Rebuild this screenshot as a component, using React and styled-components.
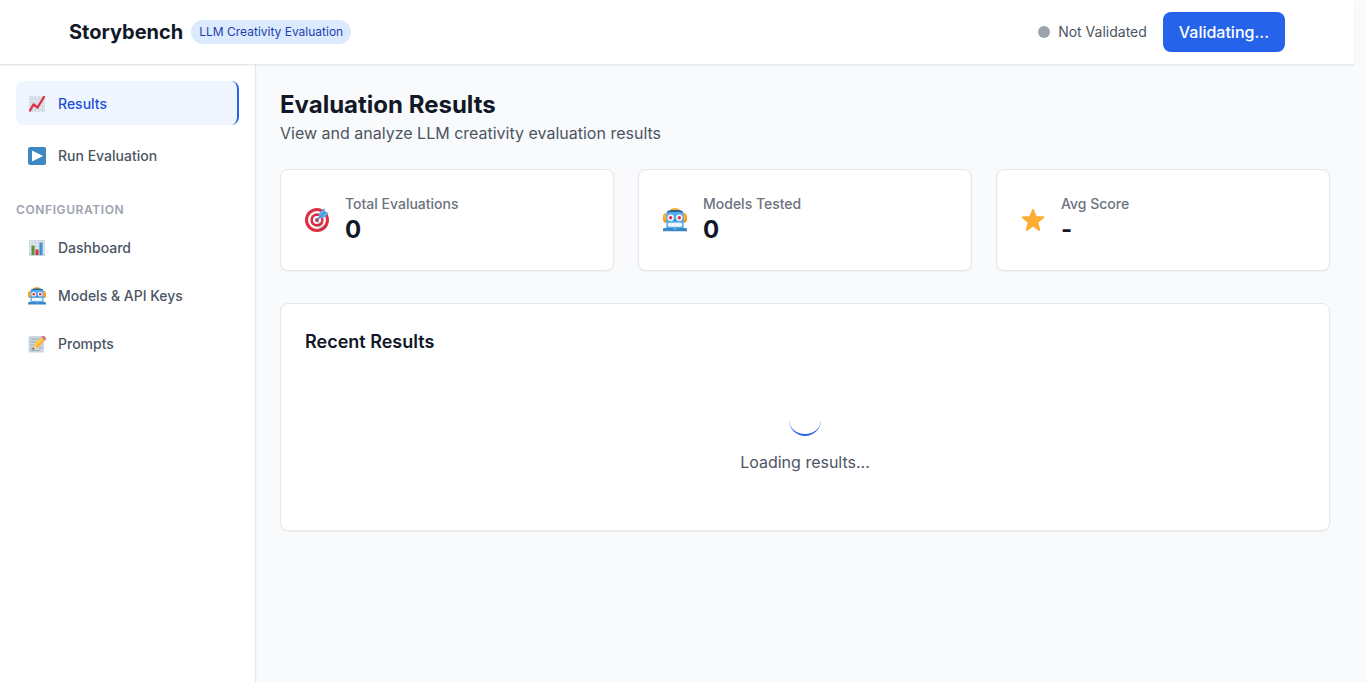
import React from 'react';
import styled, { createGlobalStyle, css, keyframes } from 'styled-components';

const GlobalStyle = createGlobalStyle`
  *, *::before, *::after { box-sizing: border-box; }
  body {
    margin: 0;
    background: #f9fafb;
    color: #111827;
    font-family: Inter, "Liberation Sans", sans-serif;
    font-size: 16px;
    line-height: 24px;
  }
  h1, h2, p, ul { margin: 0; padding: 0; }
  ul { list-style: none; }
`;

const Page = styled.div`
  min-height: 100vh;
  margin-right: 12px;
  display: flex;
  flex-direction: column;
`;

const Header = styled.header`
  position: relative;
  background: #ffffff;
  border-bottom: 1px solid #e5e7eb;
  box-shadow: 0 1px 2px rgba(0, 0, 0, 0.05);
`;

const HeaderInner = styled.div`
  max-width: 1280px;
  height: 64px;
  margin: 0 auto;
  padding: 0 32px;
  display: flex;
  align-items: center;
  justify-content: space-between;
`;

const Brand = styled.div`
  display: flex;
  align-items: center;
  gap: 8px;
`;

const BrandName = styled.span`
  font-size: 20px;
  line-height: 28px;
  font-weight: 700;
`;

const Tag = styled.span`
  padding: 4px 8px;
  border-radius: 12px;
  background: #dbeafe;
  color: #1e40af;
  font-size: 12px;
  line-height: 16px;
`;

const HeaderActions = styled.div`
  display: flex;
  align-items: center;
  gap: 16px;
`;

const Status = styled.div`
  display: flex;
  align-items: center;
  gap: 8px;
  color: #4b5563;
  font-size: 14px;
  line-height: 20px;
`;

const StatusDot = styled.span`
  width: 12px;
  height: 12px;
  border-radius: 50%;
  background: #9ca3af;
`;

const PrimaryButton = styled.button`
  padding: 8px 16px;
  border: 0;
  border-radius: 8px;
  background: #2563eb;
  color: #ffffff;
  font: inherit;
  font-weight: 500;
  cursor: pointer;
`;

const Body = styled.div`
  flex: 1;
  display: flex;
`;

const Sidebar = styled.nav`
  flex: 0 0 256px;
  padding: 16px;
  background: #ffffff;
  border-right: 1px solid #e5e7eb;
  box-shadow: 0 1px 2px rgba(0, 0, 0, 0.05);
`;

const NavList = styled.ul`
  display: flex;
  flex-direction: column;
  gap: ${(p) => p.$gap}px;
`;

const NavLink = styled.a`
  display: flex;
  align-items: center;
  gap: 12px;
  padding: 13px 12px 11px;
  border-radius: 8px;
  color: #4b5563;
  font-size: 14px;
  line-height: 20px;
  font-weight: 500;
  text-decoration: none;
  ${(p) =>
    p.$active &&
    css`
      background: #eff6ff;
      color: #1d4ed8;
      border-right: 2px solid #2563eb;
    `}
`;

const NavHeading = styled.h2`
  margin: 25px 0 7px;
  color: #9ca3af;
  font-size: 12px;
  line-height: 16px;
  font-weight: 600;
  letter-spacing: 0.05em;
  text-transform: uppercase;
`;

const Main = styled.main`
  flex: 1;
  min-width: 0;
  padding: 24px;
`;

const Title = styled.h1`
  font-size: 24px;
  line-height: 32px;
  font-weight: 700;
`;

const Subtitle = styled.p`
  color: #4b5563;
`;

const Stats = styled.div`
  display: grid;
  grid-template-columns: repeat(3, 1fr);
  gap: 24px;
  margin: 24px 0 32px;
`;

const Card = styled.section`
  padding: 24px;
  background: #ffffff;
  border: 1px solid #e5e7eb;
  border-radius: 8px;
  box-shadow: 0 1px 2px rgba(0, 0, 0, 0.05);
`;

const StatCard = styled(Card)`
  display: flex;
  align-items: center;
  gap: 16px;
`;

const StatLabel = styled.p`
  color: #6b7280;
  font-size: 14px;
  line-height: 20px;
  font-weight: 500;
`;

const StatValue = styled.p`
  font-size: 24px;
  line-height: 32px;
  font-weight: 700;
`;

const CardTitle = styled.h2`
  margin-bottom: 16px;
  font-size: 18px;
  line-height: 28px;
  font-weight: 600;
`;

const Loading = styled.div`
  display: flex;
  flex-direction: column;
  align-items: center;
  gap: 14px;
  padding: 32px 0;
  color: #4b5563;
`;

const spin = keyframes`
  from { transform: rotate(0deg); }
  to { transform: rotate(360deg); }
`;

const Spinner = styled.div`
  width: 32px;
  height: 32px;
  border-radius: 50%;
  border-bottom: 2px solid #2563eb;
  animation: ${spin} 1s linear infinite paused;
`;

const Icon = styled.svg.attrs({ viewBox: '0 0 36 36', 'aria-hidden': true })`
  display: block;
  flex: none;
  width: ${(p) => p.$size}px;
  height: ${(p) => p.$size}px;
`;

const TrendIcon = ({ size }) => (
  <Icon $size={size}>
    <rect x="2" y="2" width="32" height="32" rx="2" fill="#ccd6dd" />
    <path
      fill="#e1e8ed"
      d="M2 2h5v5H2zM9 2h5v5H9zM16 2h5v5h-5zM23 2h5v5h-5zM30 2h4v5h-4zM2 9h5v5H2zM9 9h5v5H9zM16 9h5v5h-5zM23 9h5v5h-5zM30 9h4v5h-4zM2 16h5v5H2zM9 16h5v5H9zM16 16h5v5h-5zM23 16h5v5h-5zM30 16h4v5h-4zM2 23h5v5H2zM9 23h5v5H9zM16 23h5v5h-5zM23 23h5v5h-5zM30 23h4v5h-4zM2 30h5v4H2zM9 30h5v4H9zM16 30h5v4h-5zM23 30h5v4h-5zM30 30h4v4h-4z"
    />
    <path d="M4 31l7-12 8 6L32 4" fill="none" stroke="#dd2e44" strokeWidth="4.500" strokeLinecap="round" strokeLinejoin="round" />
  </Icon>
);

const PlayIcon = ({ size }) => (
  <Icon $size={size}>
    <rect width="36" height="36" rx="4" fill="#3b88c3" />
    <path d="M8 7l22 11L8 29z" fill="#ffffff" />
  </Icon>
);

const BarsIcon = ({ size }) => (
  <Icon $size={size}>
    <rect x="2" y="2" width="32" height="32" rx="2" fill="#ccd6dd" />
    <path
      fill="#e1e8ed"
      d="M3 3h4v4H3zM9 3h5v4H9zM16 3h5v4h-5zM23 3h4v4h-4zM30 3h3v4h-3zM3 9h4v5H3zM9 9h5v5H9zM16 9h5v5h-5zM30 9h3v5h-3zM3 16h4v5H3zM16 16h5v5h-5zM30 16h3v5h-3zM3 23h4v5H3zM30 23h3v5h-3z"
    />
    <path d="M7 14a1 1 0 0 1 1-1h4a1 1 0 0 1 1 1v18H7z" fill="#5c913b" />
    <path d="M15 22a1 1 0 0 1 1-1h4a1 1 0 0 1 1 1v10h-6z" fill="#dd2e44" />
    <path d="M23 8a1 1 0 0 1 1-1h4a1 1 0 0 1 1 1v24h-6z" fill="#3b94d9" />
  </Icon>
);

const RobotIcon = ({ size }) => (
  <Icon $size={size}>
    <ellipse cx="4" cy="15" rx="4" ry="7" fill="#f4900c" />
    <ellipse cx="32" cy="15" rx="4" ry="7" fill="#f4900c" />
    <ellipse cx="4" cy="13.500" rx="3" ry="5" fill="#ffac33" />
    <ellipse cx="32" cy="13.500" rx="3" ry="5" fill="#ffac33" />
    <path d="M9 5c1-3 5-5 9-5s8 2 9 5z" fill="#ffac33" />
    <path d="M5 8c0-3 5-4 13-4s13 1 13 4v23H5z" fill="#55acee" />
    <path d="M6 5.500C8 3.500 12 3 18 3s10 .5 12 2.500V7c-4-1-8-1-12-1S10 6 6 7z" fill="#226699" />
    <path d="M2 30h32a2 2 0 0 1 2 2v3H0v-3a2 2 0 0 1 2-2z" fill="#3b88c3" />
    <path d="M14 30h8l-4 3z" fill="#55acee" />
    <circle cx="11.500" cy="14.500" r="4.700" fill="#ffffff" />
    <circle cx="24.500" cy="14.500" r="4.700" fill="#ffffff" />
    <circle cx="11.500" cy="14.500" r="2.600" fill="#dd2e44" />
    <circle cx="24.500" cy="14.500" r="2.600" fill="#dd2e44" />
    <path d="M17 17h2l1 3h-4z" fill="#3b88c3" />
    <rect x="7.500" y="22" width="21" height="6" rx="2" fill="#ffffff" />
    <path d="M12 22v6M16 22v6M20 22v6M24 22v6" stroke="#bddaf0" strokeWidth="1" />
  </Icon>
);

const MemoIcon = ({ size }) => (
  <Icon $size={size}>
    <rect x="1" y="2" width="31" height="33" rx="3" fill="#ccd6dd" />
    <path d="M6 8h17M6 14h13M6 20h8M6 26h6M23 26h5M6 31h17" stroke="#99aab5" strokeWidth="2" strokeLinecap="round" />
    <path d="M9 29l3-10 7 7z" fill="#ffcc9f" />
    <path d="M12 19L26 5l7 7-14 14z" fill="#ffac33" />
    <path d="M12 19L26 5l4 4-14 14z" fill="#ffcc4d" />
    <path d="M9 29l1-4 3 3z" fill="#292f33" />
    <path d="M26 5l2-2 7 7-2 2z" fill="#99aab5" />
    <path d="M28 3l1-1c2-2 9 4 7 7l-1 1z" fill="#ea596e" />
  </Icon>
);

const TargetIcon = ({ size }) => (
  <Icon $size={size}>
    <circle cx="18" cy="18" r="18" fill="#dd2e44" />
    <circle cx="18" cy="18" r="13.500" fill="#ffffff" />
    <circle cx="18" cy="18" r="10" fill="#dd2e44" />
    <circle cx="18" cy="18" r="6" fill="#ffffff" />
    <circle cx="18" cy="18" r="3" fill="#dd2e44" />
    <path d="M18 18l14 11c-2 3-5 5-8 6l-6-10z" fill="#58453e" opacity="0.2" />
    <path d="M18 18l8-8" stroke="#3b88c3" strokeWidth="2" strokeLinecap="round" />
    <path d="M20.500 15.500l1-8L29 0l1 6 6 1-7.500 7.500z" fill="#55acee" />
    <path d="M19 17L30 6" stroke="#3a87c2" strokeWidth="1.500" />
  </Icon>
);

const StarIcon = ({ size }) => (
  <Icon $size={size}>
    <path
      d="M18 3l4.300 11H33.500l-9.200 7.200L27.500 33 18 26.300 8.500 33l3.200-11.800L2.500 14h11.200z"
      fill="#ffac33"
      stroke="#ffac33"
      strokeWidth="3"
      strokeLinejoin="round"
    />
  </Icon>
);

const mainLinks = [
  { label: 'Results', icon: TrendIcon, active: true },
  { label: 'Run Evaluation', icon: PlayIcon },
];

const configLinks = [
  { label: 'Dashboard', icon: BarsIcon },
  { label: 'Models & API Keys', icon: RobotIcon },
  { label: 'Prompts', icon: MemoIcon },
];

const stats = [
  { label: 'Total Evaluations', value: '0', icon: TargetIcon },
  { label: 'Models Tested', value: '0', icon: RobotIcon },
  { label: 'Avg Score', value: '-', icon: StarIcon },
];

const NavItems = ({ links, gap }) => (
  <NavList $gap={gap}>
    {links.map(({ label, icon: Glyph, active }) => (
      <li key={label}>
        <NavLink href="#" $active={active} aria-current={active ? 'page' : undefined}>
          <Glyph size={18} />
          {label}
        </NavLink>
      </li>
    ))}
  </NavList>
);

export default function App() {
  return (
    <>
      <GlobalStyle />
      <Page>
        <Header>
          <HeaderInner>
            <Brand>
              <BrandName>Storybench</BrandName>
              <Tag>LLM Creativity Evaluation</Tag>
            </Brand>
            <HeaderActions>
              <Status>
                <StatusDot />
                Not Validated
              </Status>
              <PrimaryButton type="button">Validating...</PrimaryButton>
            </HeaderActions>
          </HeaderInner>
        </Header>
        <Body>
          <Sidebar>
            <NavItems links={mainLinks} gap={8} />
            <NavHeading>Configuration</NavHeading>
            <NavItems links={configLinks} gap={4} />
          </Sidebar>
          <Main>
            <Title>Evaluation Results</Title>
            <Subtitle>View and analyze LLM creativity evaluation results</Subtitle>
            <Stats>
              {stats.map(({ label, value, icon: Glyph }) => (
                <StatCard key={label}>
                  <Glyph size={24} />
                  <div>
                    <StatLabel>{label}</StatLabel>
                    <StatValue>{value}</StatValue>
                  </div>
                </StatCard>
              ))}
            </Stats>
            <Card>
              <CardTitle>Recent Results</CardTitle>
              <Loading role="status">
                <Spinner />
                <p>Loading results...</p>
              </Loading>
            </Card>
          </Main>
        </Body>
      </Page>
    </>
  );
}
